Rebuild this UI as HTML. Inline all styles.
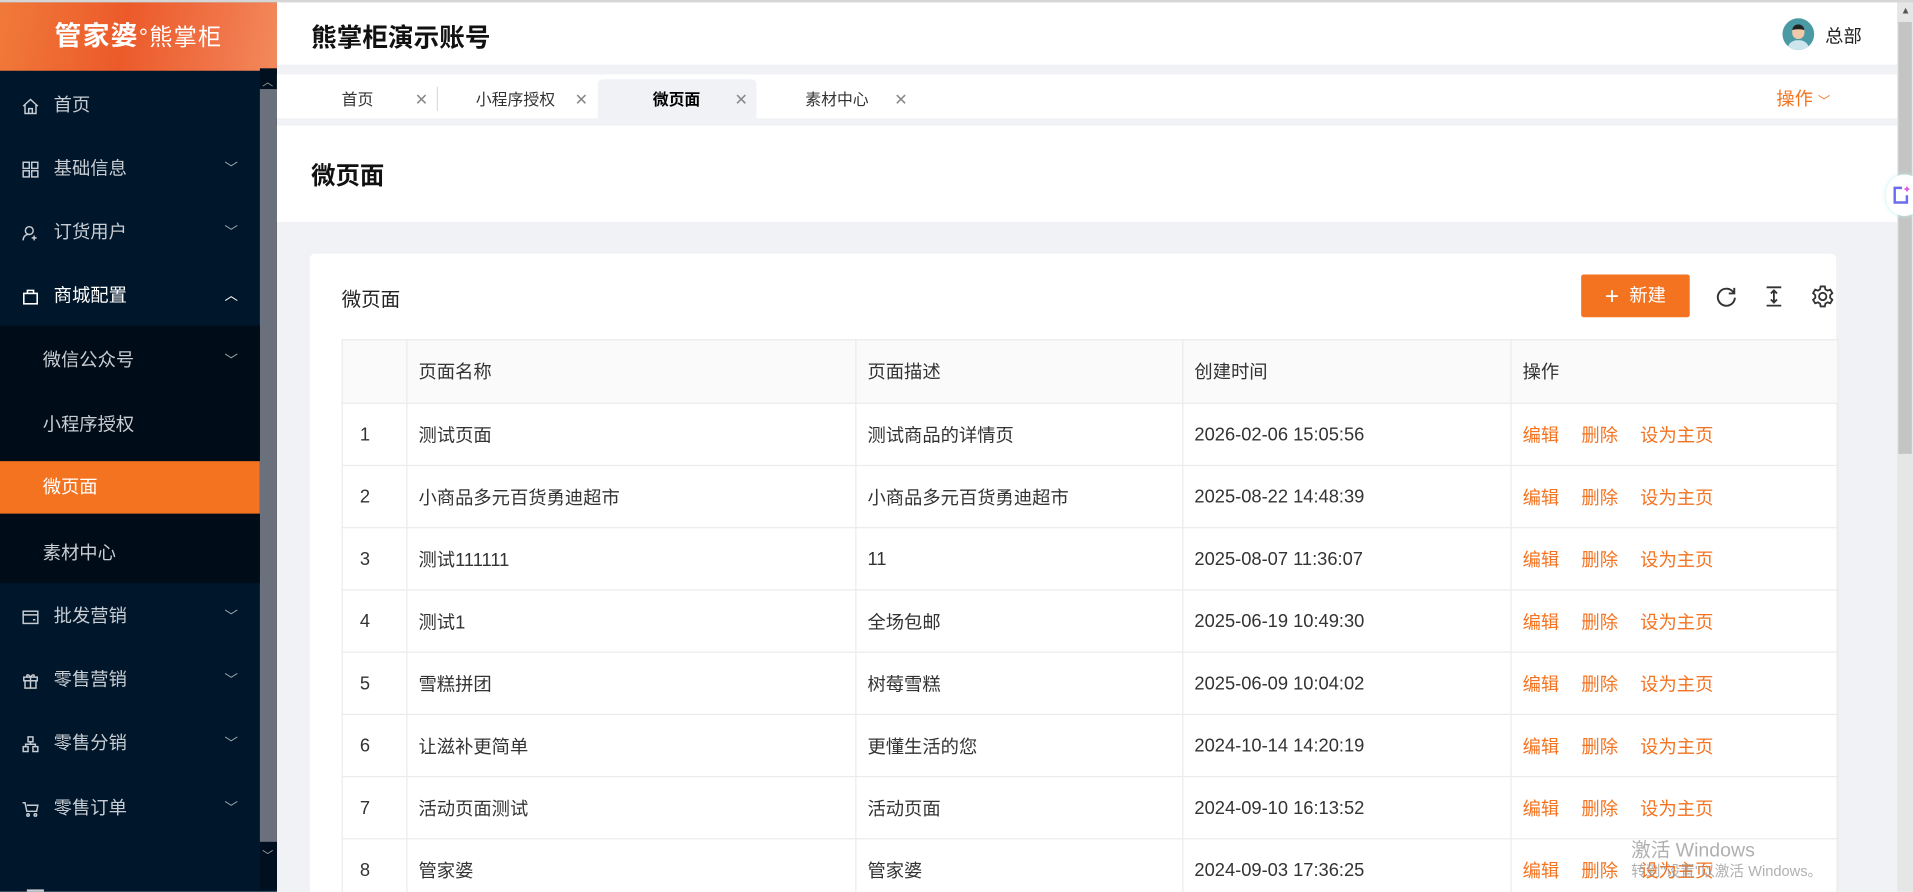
<!DOCTYPE html>
<html><head><meta charset="utf-8">
<style>
*{box-sizing:border-box;margin:0;padding:0}
html,body{width:1913px;height:892px;overflow:hidden;background:#f0f2f5}
#w{position:absolute;left:0;top:0;width:1568px;height:731px;transform:scale(1.22003);transform-origin:0 0;font-family:"Liberation Sans","Noto Sans CJK SC",sans-serif;color:#222;background:#f0f2f5;overflow:hidden}
.abs{position:absolute}
#side{left:0;top:2px;width:227px;height:729px;background:#00162b}
#logo{left:0;top:0;width:227px;height:56px;background:linear-gradient(100deg,#f07a3a 0%,#ec5a2a 45%,#f0764a 80%,#f38a5c 100%);color:#fff;font-size:22px;font-weight:bold;text-align:center;line-height:56px;letter-spacing:1px}
#logo small{font-size:19px;font-weight:normal}
.mi{position:absolute;left:0;width:213px;height:52px;color:#c8cdd3;font-size:15px;line-height:52px}
.mi .ic{position:absolute;left:18px;top:19px;width:14px;height:14px}
.mi .t{position:absolute;left:44px}
.mi .ar{position:absolute;left:184px;top:0;font-size:11px;color:#9aa}
.sub{background:#000c17}
#sb{left:213px;top:56px;width:14px;height:673px;background:#001020}
#sbt{left:213px;top:73px;width:14px;height:617px;background:#6b717c}
#hdr{left:227px;top:2px;width:1328px;height:51px;background:#fff}
#tabs{left:227px;top:61px;width:1328px;height:36px;background:#fff}
.tab{position:absolute;top:3px;height:36px;line-height:36px;font-size:13px;color:#333}
#ph{left:227px;top:103px;width:1328px;height:79px;background:#fff}
#card{left:254px;top:208px;width:1251px;height:540px;background:#fff;border-radius:4px}
table{position:absolute;left:280px;top:278px;border-collapse:collapse;font-size:15px;color:#333}
td,th{border:1px solid #ebebeb;height:51px;text-align:left;font-weight:normal;padding-left:9px}
th{background:#fafafa;height:52px}
td.n{padding-left:14px}
.o{color:#f47320;margin-right:14px}
#rsb{left:1555px;top:2px;width:13px;height:729px;background:#e6e6e6}
</style></head><body><div id="w">
<div class="abs" style="left:0;top:0;width:1568px;height:2px;background:#d6d6d6"></div>
<div id="side" class="abs">
<div id="logo" class="abs">管家婆<small>°熊掌柜</small></div>
</div>
<div id="sb" class="abs"></div><div id="sbt" class="abs"></div>
<div class="abs" style="left:215px;top:60px;color:#aaa;font-size:9px">︿</div>
<div class="abs" style="left:215px;top:694px;color:#aaa;font-size:9px">﹀</div>
<div class="mi" style="top:61px"><svg class="ic" viewBox="0 0 14 14" fill="none" stroke="#c8cdd3" stroke-width="1.2"><path d="M1 7L7 1.5 13 7M2.5 5.8V13h9V5.8M5.5 13V9h3v4"/></svg><span class="t">首页</span></div>
<div class="mi" style="top:113px"><svg class="ic" viewBox="0 0 14 14" fill="none" stroke="#c8cdd3" stroke-width="1.2"><rect x="1" y="1" width="5" height="5"/><rect x="8" y="1" width="5" height="5"/><rect x="1" y="8" width="5" height="5"/><rect x="8" y="8" width="5" height="5"/></svg><span class="t">基础信息</span><span class="ar">﹀</span></div>
<div class="mi" style="top:165px"><svg class="ic" viewBox="0 0 14 14" fill="none" stroke="#c8cdd3" stroke-width="1.2"><circle cx="6" cy="5" r="3.2"/><path d="M1 13c0-3 2-5 5-5M10 9v4M8 11h4"/></svg><span class="t">订货用户</span><span class="ar">﹀</span></div>
<div class="mi" style="top:217px;color:#fff"><svg class="ic" viewBox="0 0 14 14" fill="none" stroke="#fff" stroke-width="1.3"><rect x="1.5" y="4.5" width="11" height="8.5"/><path d="M4.5 4.5V2h5v2.5"/></svg><span class="t">商城配置</span><span class="ar" style="color:#fff">︿</span></div>
<div class="abs sub" style="left:0;top:267px;width:213px;height:211px"></div>
<div class="mi" style="top:270px"><span class="t" style="left:35px">微信公众号</span><span class="ar">﹀</span></div>
<div class="mi" style="top:323px"><span class="t" style="left:35px">小程序授权</span></div>
<div class="mi" style="top:378px;height:43px;line-height:43px;background:#f47320;color:#fff"><span class="t" style="left:35px">微页面</span></div>
<div class="mi" style="top:428px"><span class="t" style="left:35px">素材中心</span></div>
<div class="mi" style="top:480px"><svg class="ic" viewBox="0 0 14 14" fill="none" stroke="#c8cdd3" stroke-width="1.2"><rect x="1" y="2" width="12" height="10"/><path d="M1 5h12M9 9h2"/></svg><span class="t">批发营销</span><span class="ar">﹀</span></div>
<div class="mi" style="top:532px"><svg class="ic" viewBox="0 0 14 14" fill="none" stroke="#c8cdd3" stroke-width="1.2"><rect x="1.5" y="4" width="11" height="3"/><rect x="2.5" y="7" width="9" height="6"/><path d="M7 4v9M4.5 4C3 2 5 1 7 4c2-3 4-2 2.5 0"/></svg><span class="t">零售营销</span><span class="ar">﹀</span></div>
<div class="mi" style="top:584px"><svg class="ic" viewBox="0 0 14 14" fill="none" stroke="#c8cdd3" stroke-width="1.2"><rect x="5" y="1" width="4" height="4"/><rect x="1" y="9" width="4" height="4"/><rect x="9" y="9" width="4" height="4"/><path d="M7 5v2M3 9V7h8v2"/></svg><span class="t">零售分销</span><span class="ar">﹀</span></div>
<div class="mi" style="top:637px"><svg class="ic" viewBox="0 0 14 14" fill="none" stroke="#c8cdd3" stroke-width="1.2"><path d="M0.5 2h2l1.5 7h8l1-5H4"/><circle cx="5" cy="12" r="1"/><circle cx="11" cy="12" r="1"/></svg><span class="t">零售订单</span><span class="ar">﹀</span></div>
<div class="abs" style="left:22px;top:729px;width:14px;height:2px;background:#c8cdd3"></div>

<div id="hdr" class="abs">
<div class="abs" style="left:28px;top:13px;font-size:21px;font-weight:bold;color:#111">熊掌柜演示账号</div>
<div class="abs" style="left:1234px;top:13px;width:26px;height:26px;border-radius:50%;background:#4a9aa5;overflow:hidden"><div class="abs" style="left:8px;top:5px;width:10px;height:12px;border-radius:5px;background:#f2c9a8;border-top:4px solid #222"></div><div class="abs" style="left:4px;top:18px;width:18px;height:10px;border-radius:8px 8px 0 0;background:#cde6ee"></div></div>
<div class="abs" style="left:1269px;top:17px;font-size:15px;color:#222">总部</div>
</div>

<div id="tabs" class="abs">
<div class="tab" style="left:53px">首页</div><div class="tab" style="left:113px;color:#888">✕</div>
<div class="abs" style="left:131px;top:10px;width:1px;height:20px;background:#ddd"></div>
<div class="tab" style="left:163px">小程序授权</div><div class="tab" style="left:244px;color:#888">✕</div>
<div class="abs" style="left:263px;top:4px;width:130px;height:32px;background:#f0f2f5;border-radius:4px 4px 0 0"></div>
<div class="tab" style="left:308px;font-weight:bold;color:#000">微页面</div><div class="tab" style="left:375px;color:#888">✕</div>
<div class="tab" style="left:433px">素材中心</div><div class="tab" style="left:506px;color:#888">✕</div>
<div class="tab" style="left:1229px;color:#f47320;font-size:15px">操作 <span style="font-size:10px">﹀</span></div>
</div>

<div id="ph" class="abs"><div class="abs" style="left:28px;top:25px;font-size:20px;font-weight:bold;color:#111">微页面</div></div>

<div id="card" class="abs">
<div class="abs" style="left:26px;top:24px;font-size:16px;color:#222">微页面</div>
<div class="abs" style="left:1042px;top:17px;width:89px;height:35px;background:#f47320;border-radius:2px;color:#fff;font-size:15px;line-height:35px;text-align:center"><span style="font-size:20px;font-weight:200;vertical-align:-2px">+</span>&nbsp; 新建</div>
<svg class="abs" style="left:1152px;top:26px" width="18" height="18" viewBox="0 0 18 18" fill="none" stroke="#333" stroke-width="1.6"><path d="M15 6A7 7 0 1 0 16 10"/><path d="M15.5 2v4.5H11"/></svg>
<svg class="abs" style="left:1192px;top:26px" width="16" height="18" viewBox="0 0 16 18" fill="none" stroke="#333" stroke-width="1.5"><path d="M2 1.5h12M2 16.5h12M8 4v10M5.5 6.5L8 4l2.5 2.5M5.5 11.5L8 14l2.5-2.5"/></svg>
<svg class="abs" style="left:1230px;top:25px" width="20" height="20" viewBox="0 0 20 20" fill="none" stroke="#333" stroke-width="1.5"><path d="M8.3 1.8h3.4l.5 2.4 1.7 1 2.3-.8 1.7 2.9-1.8 1.6v2.2l1.8 1.6-1.7 2.9-2.3-.8-1.7 1-.5 2.4H8.3l-.5-2.4-1.7-1-2.3.8-1.7-2.9 1.8-1.6V8.9L2.1 7.3l1.7-2.9 2.3.8 1.7-1z"/><circle cx="10" cy="10" r="3"/></svg>
</div>

<table>
<tr><th style="width:53px"></th><th style="width:368px">页面名称</th><th style="width:268px">页面描述</th><th style="width:269px">创建时间</th><th style="width:268px">操作</th></tr>
<tr><td class="n">1</td><td>测试页面</td><td>测试商品的详情页</td><td>2026-02-06 15:05:56</td><td><span class="o">编辑</span> <span class="o">删除</span> <span class="o">设为主页</span></td></tr>
<tr><td class="n">2</td><td>小商品多元百货勇迪超市</td><td>小商品多元百货勇迪超市</td><td>2025-08-22 14:48:39</td><td><span class="o">编辑</span> <span class="o">删除</span> <span class="o">设为主页</span></td></tr>
<tr><td class="n">3</td><td>测试111111</td><td>11</td><td>2025-08-07 11:36:07</td><td><span class="o">编辑</span> <span class="o">删除</span> <span class="o">设为主页</span></td></tr>
<tr><td class="n">4</td><td>测试1</td><td>全场包邮</td><td>2025-06-19 10:49:30</td><td><span class="o">编辑</span> <span class="o">删除</span> <span class="o">设为主页</span></td></tr>
<tr><td class="n">5</td><td>雪糕拼团</td><td>树莓雪糕</td><td>2025-06-09 10:04:02</td><td><span class="o">编辑</span> <span class="o">删除</span> <span class="o">设为主页</span></td></tr>
<tr><td class="n">6</td><td>让滋补更简单</td><td>更懂生活的您</td><td>2024-10-14 14:20:19</td><td><span class="o">编辑</span> <span class="o">删除</span> <span class="o">设为主页</span></td></tr>
<tr><td class="n">7</td><td>活动页面测试</td><td>活动页面</td><td>2024-09-10 16:13:52</td><td><span class="o">编辑</span> <span class="o">删除</span> <span class="o">设为主页</span></td></tr>
<tr><td class="n">8</td><td>管家婆</td><td>管家婆</td><td>2024-09-03 17:36:25</td><td><span class="o">编辑</span> <span class="o">删除</span> <span class="o">设为主页</span></td></tr>
</table>

<div class="abs" style="left:1337px;top:683px;font-size:16px;color:rgba(150,150,150,.75)">激活 Windows</div>
<div class="abs" style="left:1337px;top:705px;font-size:12px;color:rgba(150,150,150,.75)">转到"设置"以激活 Windows。</div>

<div id="rsb" class="abs"></div>
<div class="abs" style="left:1556px;top:18px;width:11px;height:354px;background:#c4c4c4"></div>
<div class="abs" style="left:1558px;top:4px;font-size:8px;color:#555">▲</div>
<div class="abs" style="left:1546px;top:143px;width:30px;height:34px;border-radius:17px;background:#fff;box-shadow:0 0 4px #bfeeee"></div>
<svg class="abs" style="left:1550px;top:152px" width="16" height="16" viewBox="0 0 16 16" fill="none" stroke="#6a6cf0" stroke-width="2"><path d="M9 2H3v12h10V8"/><path d="M13 1v4M11 3h4" stroke="#e05ae0" stroke-width="1.5"/></svg>
</div></body></html>
